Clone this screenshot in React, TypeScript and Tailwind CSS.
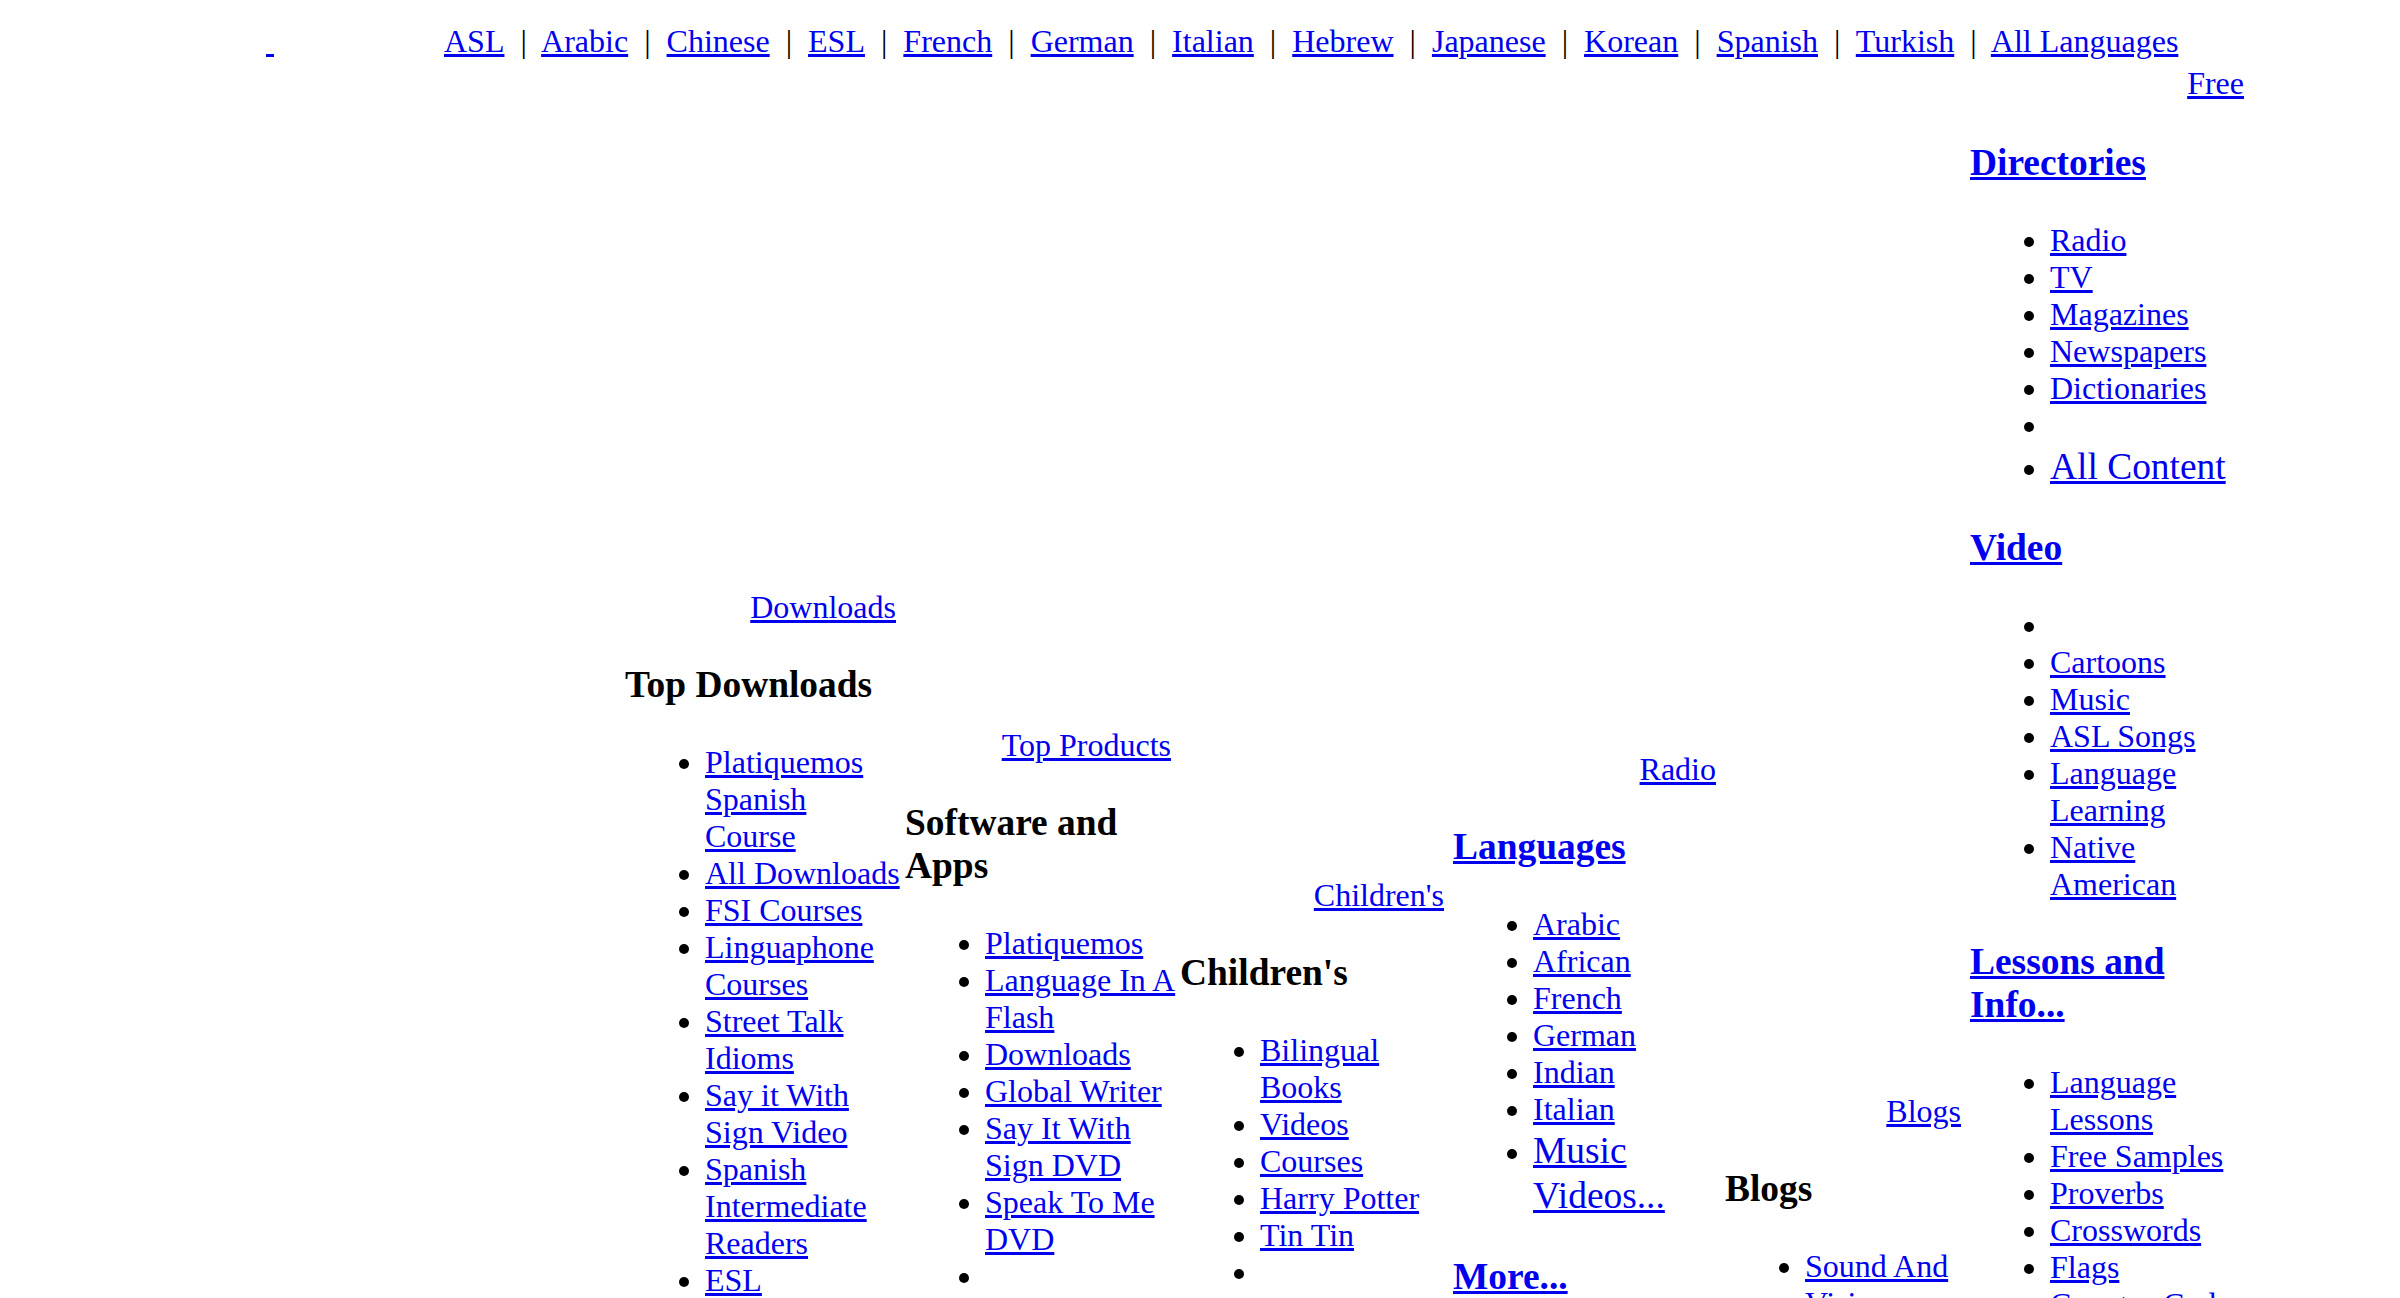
const linkCls = "text-[#0000ee] underline";

type Item = string | { text: string; big?: boolean };

const languages = [
  "ASL",
  "Arabic",
  "Chinese",
  "ESL",
  "French",
  "German",
  "Italian",
  "Hebrew",
  "Japanese",
  "Korean",
  "Spanish",
  "Turkish",
  "All Languages",
];

function Heading({ text, asLink }: { text: string; asLink?: boolean }) {
  return (
    <h3 className="my-[37.44px] text-[37.44px] font-bold leading-[43px]">
      {asLink ? (
        <a href="#" className={linkCls}>
          {text}
        </a>
      ) : (
        text
      )}
    </h3>
  );
}

function List({ items }: { items: Item[] }) {
  return (
    <ul className="my-[32px] list-disc pl-[80px]">
      {items.map((item, i) => {
        const text = typeof item === "string" ? item : item.text;
        const big = typeof item !== "string" && item.big;
        return (
          <li key={i}>
            {text ? (
              <a
                href="#"
                className={
                  big
                    ? "text-[37.44px] leading-[45px] text-[#0000ee] underline"
                    : linkCls
                }
              >
                {text}
              </a>
            ) : (
              "\u00a0"
            )}
          </li>
        );
      })}
    </ul>
  );
}

interface ColumnProps {
  className: string;
  label: string;
  heading: string;
  headingLink?: boolean;
  items: Item[];
  more?: string;
}

function Column({ className, label, heading, headingLink, items, more }: ColumnProps) {
  return (
    <div className={className}>
      <div className="pr-[9px] text-right">
        <a href="#" className={linkCls}>
          {label}
        </a>
      </div>
      <Heading text={heading} asLink={headingLink} />
      <List items={items} />
      {more ? <Heading text={more} asLink /> : null}
    </div>
  );
}

export default function App() {
  return (
    <div className="h-screen overflow-hidden bg-white font-['Liberation_Serif',serif] text-[32px] leading-[37px] text-black">
      {/* language bar */}
      <div className="flex items-baseline pl-[266px] pt-[23px]">
        <a href="#" className={linkCls}>
          {"\u00a0"}
        </a>
        <div className="ml-[170px] whitespace-nowrap">
          {languages.map((lang, i) => (
            <span key={lang}>
              <a href="#" className={linkCls}>
                {lang}
              </a>
              {i < languages.length - 1 ? "\u00a0 |\u00a0 " : null}
            </span>
          ))}
        </div>
      </div>
      <div className="mt-[5px] flex justify-end pr-[156px]">
        <a href="#" className={linkCls}>
          Free
        </a>
      </div>

      <div className="flex items-start pl-[625px]">
        <Column
          className="mr-[3px] w-[277px] shrink-0 pt-[487px] [&>div:first-child]:pr-[6px]"
          label="Downloads"
          heading="Top Downloads"
          items={[
            "Platiquemos Spanish Course",
            "All Downloads",
            "FSI Courses",
            "Linguaphone Courses",
            "Street Talk Idioms",
            "Say it With Sign Video",
            "Spanish Intermediate Readers",
            "ESL",
            "Interactive Spanish",
          ]}
        />
        <Column
          className="w-[275px] shrink-0 pt-[625px]"
          label="Top Products"
          heading="Software and Apps"
          items={[
            "Platiquemos",
            "Language In A Flash",
            "Downloads",
            "Global Writer",
            "Say It With Sign DVD",
            "Speak To Me DVD",
            "",
          ]}
        />
        <Column
          className="w-[273px] shrink-0 pt-[775px]"
          label="Children's"
          heading="Children's"
          items={["Bilingual Books", "Videos", "Courses", "Harry Potter", "Tin Tin", ""]}
        />
        <Column
          className="w-[272px] shrink-0 pt-[649px]"
          label="Radio"
          heading="Languages"
          headingLink
          items={[
            "Arabic",
            "African",
            "French",
            "German",
            "Indian",
            "Italian",
            { text: "Music Videos...", big: true },
          ]}
          more="More..."
        />
        <Column
          className="w-[245px] shrink-0 pt-[991px]"
          label="Blogs"
          heading="Blogs"
          items={["Sound And Vision"]}
        />

        {/* right-hand directory */}
        <div className="w-[274px] shrink-0 pt-[2px]">
          <Heading text="Directories" asLink />
          <List
            items={[
              "Radio",
              "TV",
              "Magazines",
              "Newspapers",
              "Dictionaries",
              "",
              { text: "All Content", big: true },
            ]}
          />
          <Heading text="Video" asLink />
          <List
            items={["", "Cartoons", "Music", "ASL Songs", "Language Learning", "Native American"]}
          />
          <Heading text="Lessons and Info..." asLink />
          <List
            items={[
              "Language Lessons",
              "Free Samples",
              "Proverbs",
              "Crosswords",
              "Flags",
              "Country Codes",
              "Idioms",
            ]}
          />
        </div>
      </div>
    </div>
  );
}
